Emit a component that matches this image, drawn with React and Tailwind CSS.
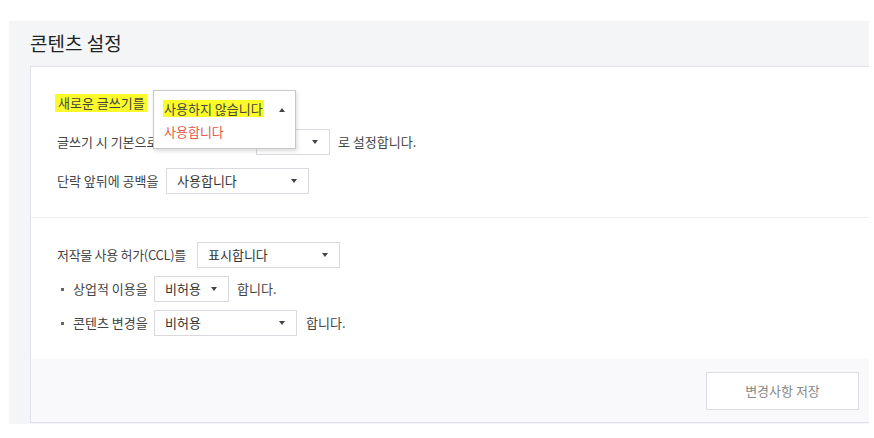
import React from 'react';

const Arrow = ({ up = false }) => (
  <svg width="6" height="4" viewBox="0 0 6 4" className="shrink-0">
    {up ? <path d="M0 4 L3 0 L6 4 Z" fill="#444" /> : <path d="M0 0 L6 0 L3 4 Z" fill="#444" />}
  </svg>
);

const Select = ({ value, width }) => (
  <div
    className="flex h-[26px] items-center justify-between border border-[#d9d9df] bg-white pl-[10px] pr-[11px] text-[13px] text-[#333]"
    style={{ width }}
  >
    <span className="whitespace-nowrap">{value}</span>
    <Arrow />
  </div>
);

const App = () => {
  return (
    <div
      className="min-h-[438px] bg-white pt-[21px] pl-[9px] text-[#444]"
      style={{ fontFamily: '"Noto Sans CJK KR", "Noto Sans", sans-serif' }}
    >
      <div className="w-[860px] bg-[#f4f5f7] pl-[21px] pb-[1px]">
        <div className="flex h-[45px] items-center text-[19px] text-[#222]">콘텐츠 설정</div>

        <div className="border-t border-l border-b border-[#e1e1ea] bg-white">
          {/* section 1 */}
          <div className="flex flex-col gap-[13px] border-b border-[#efeff3] pl-[26px] pt-[23px] pb-[23px] text-[13px]">
            <div className="flex h-[26px] items-center">
              <span className="-ml-[2px] w-[92px] whitespace-nowrap bg-[#fbfb2a] px-[3px] leading-[18px]">새로운 글쓰기를</span>
              <div className="relative ml-[6px] h-[26px] w-[143px]">
                <div className="absolute left-0 top-0 z-10 w-[143px] border border-[#c8c8cc] bg-white shadow-[1px_2px_4px_rgba(0,0,0,0.15)]">
                  <div className="flex h-[29px] items-end justify-between pl-[9px] pr-[10px] pb-[3px]">
                    <span className="bg-[#fbfb2a] px-[1px] leading-[17px]">사용하지 않습니다</span>
                    <span className="mb-[5px]"><Arrow up /></span>
                  </div>
                  <div className="flex h-[28px] items-center pl-[10px] pb-[4px] text-[#e8574a]">사용합니다</div>
                </div>
              </div>
            </div>

            <div className="flex h-[26px] items-center">
              <span className="w-[199px] overflow-hidden whitespace-nowrap">글쓰기 시 기본으로 사용할 에디터를</span>
              <Select value="" width="74px" />
              <span className="ml-[8px]">로 설정합니다.</span>
            </div>

            <div className="flex h-[26px] items-center">
              <span className="w-[109px] whitespace-nowrap">단락 앞뒤에 공백을</span>
              <Select value="사용합니다" width="143px" />
            </div>
          </div>

          {/* section 2 */}
          <div className="flex flex-col gap-[8px] pl-[26px] pt-[24px] pb-[23px] text-[13px]">
            <div className="flex h-[26px] items-center">
              <span className="w-[140px] whitespace-nowrap tracking-[-0.3px]">저작물 사용 허가(CCL)를</span>
              <Select value="표시합니다" width="143px" />
            </div>
            <div className="flex h-[26px] items-center">
              <span className="ml-[4px] mr-[9px] h-[3px] w-[3px] bg-[#666]" />
              <span className="w-[81px] whitespace-nowrap">상업적 이용을</span>
              <Select value="비허용" width="75px" />
              <span className="ml-[8px]">합니다.</span>
            </div>
            <div className="flex h-[26px] items-center">
              <span className="ml-[4px] mr-[9px] h-[3px] w-[3px] bg-[#666]" />
              <span className="w-[81px] whitespace-nowrap">콘텐츠 변경을</span>
              <Select value="비허용" width="143px" />
              <span className="ml-[9px]">합니다.</span>
            </div>
          </div>

          {/* footer */}
          <div className="flex h-[63px] items-start justify-end bg-[#f9f9fb] pt-[13px] pr-[10px]">
            <button className="h-[38px] w-[153px] border border-[#dcdce2] bg-white text-[13px] text-[#888]">
              변경사항 저장
            </button>
          </div>
        </div>
      </div>
    </div>
  );
};

export default App;
